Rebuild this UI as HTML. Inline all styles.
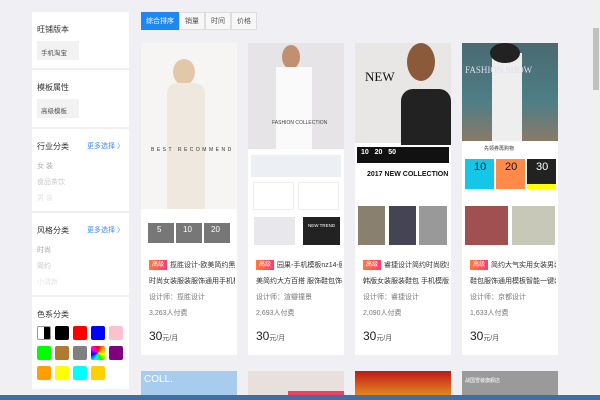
<!DOCTYPE html>
<html><head><meta charset="utf-8"><style>
*{margin:0;padding:0;box-sizing:border-box}
body{width:600px;height:400px;overflow:hidden;background:#efeff4;font-family:"Liberation Sans","Noto Sans CJK SC",sans-serif;position:relative;color:#333}
.a{position:absolute;white-space:nowrap}
.sec{position:absolute;left:32px;width:97px;background:#fff}
.h{position:absolute;left:5px;font-size:8px;color:#333}
.box{position:absolute;left:5px;width:42px;height:19px;background:#f2f2f2;font-size:6.5px;color:#555;padding:6px 0 0 4px}
.more{position:absolute;right:5px;font-size:7px;color:#3a8ef6}
.it{position:absolute;left:5px;font-size:7px}
.sw{position:absolute;width:14px;height:14px;border-radius:2px}
.card{position:absolute;top:43px;width:96px;height:312px;background:#fff}
.img{position:absolute;left:0;top:0;width:96px;height:202px;overflow:hidden}
.t{position:absolute;left:8px;font-size:7px;color:#333;line-height:16px;width:86px;white-space:nowrap;overflow:hidden}
.bd{display:inline-block;background:linear-gradient(90deg,#ff7a3c,#ff3c6e);color:#fff;font-size:6px;padding:0 3px;line-height:10px;margin-right:3px;vertical-align:1px}
.g{color:#777}
.p{position:absolute;left:8px;top:286px;font-size:12px;color:#222}
.p small{font-size:7px;color:#555}
.tab{position:absolute;top:12px;height:18px;font-size:7px;text-align:center;line-height:17px;border:1px solid #ddd;background:#f7f7f7;color:#555}
.c2{position:absolute;top:371px;width:96px;height:29px;overflow:hidden}
</style></head><body>
<div class="sec" style="top:12px;height:56px"><div class="h" style="top:12px">旺铺版本</div><div class="box" style="top:29px">手机淘宝</div></div>
<div class="sec" style="top:70px;height:57px"><div class="h" style="top:12px">模板属性</div><div class="box" style="top:29px">高级模板</div></div>
<div class="sec" style="top:129px;height:82px"><div class="h" style="top:12px">行业分类</div><div class="more" style="top:12px">更多选择 〉</div>
<div class="it" style="top:32px;color:#aaa">女 装</div><div class="it" style="top:48px;color:#c8c8c8">食品茶饮</div><div class="it" style="top:64px;color:#e4e4e4">男 装</div></div>
<div class="sec" style="top:213px;height:82px"><div class="h" style="top:12px">风格分类</div><div class="more" style="top:12px">更多选择 〉</div>
<div class="it" style="top:32px;color:#aaa">时尚</div><div class="it" style="top:48px;color:#c8c8c8">简约</div><div class="it" style="top:64px;color:#e4e4e4">小清新</div></div>
<div class="sec" style="top:297px;height:92px"><div class="h" style="top:12px">色系分类</div></div>
<div class="sw" style="left:37px;top:326px;border:1px solid #999;background:linear-gradient(90deg,#fff 50%,#000 50%)"></div>
<div class="sw" style="left:55px;top:326px;background:#000"></div>
<div class="sw" style="left:73px;top:326px;background:#f00"></div>
<div class="sw" style="left:91px;top:326px;background:#00f"></div>
<div class="sw" style="left:109px;top:326px;background:#fbc1cc"></div>
<div class="sw" style="left:37px;top:346px;background:#0f0"></div>
<div class="sw" style="left:55px;top:346px;background:#b07a30"></div>
<div class="sw" style="left:73px;top:346px;background:#808080"></div>
<div class="sw" style="left:91px;top:346px;background:conic-gradient(red,orange,yellow,lime,cyan,blue,magenta,red)"></div>
<div class="sw" style="left:109px;top:346px;background:#800080"></div>
<div class="sw" style="left:37px;top:366px;background:#ffa000"></div>
<div class="sw" style="left:55px;top:366px;background:#ff0"></div>
<div class="sw" style="left:73px;top:366px;background:#0ff"></div>
<div class="sw" style="left:91px;top:366px;background:#ffd000"></div>
<div class="tab" style="left:141px;width:38px;background:#1e88f0;color:#fff;border-color:#1e88f0">综合排序</div>
<div class="tab" style="left:179px;width:26px">销量</div>
<div class="tab" style="left:205px;width:26px">时间</div>
<div class="tab" style="left:231px;width:26px">价格</div>
<div class="card" style="left:141px">
<div class="img" style="background:#f6f5f3">
<div class="a" style="left:32px;top:16px;width:22px;height:26px;border-radius:50%;background:#e0c8a8"></div>
<div class="a" style="left:26px;top:40px;width:38px;height:160px;border-radius:10px 10px 0 0;background:#efe8de"></div>
<div class="a" style="left:10px;top:104px;font-size:5px;letter-spacing:2.5px;color:#333">BEST RECOMMEND</div>
<div class="a" style="left:0;top:166px;width:96px;height:36px;background:#fff"></div>
<div class="a" style="left:7px;top:180px;width:26px;height:20px;background:#777"></div>
<div class="a" style="left:35px;top:180px;width:26px;height:20px;background:#777"></div>
<div class="a" style="left:63px;top:180px;width:26px;height:20px;background:#777"></div>
<div class="a" style="left:16px;top:182px;color:#fff;font-size:8px">5</div><div class="a" style="left:42px;top:182px;color:#fff;font-size:8px">10</div><div class="a" style="left:70px;top:182px;color:#fff;font-size:8px">20</div>
</div>
<div class="t" style="top:215px"><span class="bd">高级</span>揽胜设计-欧美简约黑白</div>
<div class="t" style="top:231px">时尚女装服装服饰通用手机模</div>
<div class="t g" style="top:247px">设计师：揽胜设计</div>
<div class="t g" style="top:263px">3,263人付费</div>
<div class="p">30<small>元/月</small></div></div>

<div class="card" style="left:248px">
<div class="img" style="background:#fff">
<div class="a" style="left:0;top:0;width:96px;height:106px;background:#e6e4e6"></div>
<div class="a" style="left:34px;top:2px;width:18px;height:24px;border-radius:50%;background:#c09070"></div>
<div class="a" style="left:28px;top:24px;width:36px;height:82px;background:#fafafa"></div>
<div class="a" style="left:24px;top:77px;font-size:5px;color:#444">FASHION COLLECTION</div>
<div class="a" style="left:3px;top:112px;width:90px;height:22px;background:#eceff3"></div>
<div class="a" style="left:5px;top:139px;width:41px;height:28px;border:1px solid #eee"></div>
<div class="a" style="left:50px;top:139px;width:41px;height:28px;border:1px solid #eee"></div>
<div class="a" style="left:6px;top:174px;width:41px;height:28px;background:#e8e8ec"></div>
<div class="a" style="left:55px;top:174px;width:37px;height:28px;background:#222"></div>
<div class="a" style="left:60px;top:180px;font-size:4.5px;color:#fff">NEW TREND</div>
</div>
<div class="t" style="top:215px"><span class="bd">高级</span>园果-手机模板nz14-欧</div>
<div class="t" style="top:231px">美简约大方百搭 服饰鞋包饰品</div>
<div class="t g" style="top:247px">设计师：渲瓣撞景</div>
<div class="t g" style="top:263px">2,693人付费</div>
<div class="p">30<small>元/月</small></div></div>

<div class="card" style="left:355px">
<div class="img" style="background:#fff">
<div class="a" style="left:0;top:0;width:96px;height:100px;background:#e9e7e5"></div>
<div class="a" style="left:52px;top:0;width:28px;height:38px;border-radius:50%;background:#8a5a3a"></div>
<div class="a" style="left:46px;top:46px;width:50px;height:56px;border-radius:12px 12px 0 0;background:#222"></div>
<div class="a" style="left:10px;top:26px;font-size:13px;font-family:'Liberation Serif',serif;color:#111">NEW</div>
<div class="a" style="left:2px;top:104px;width:92px;height:16px;background:#111"></div>
<div class="a" style="left:6px;top:106px;font-size:7px;color:#fff;font-weight:bold">10 &nbsp; 20 &nbsp; 50</div>
<div class="a" style="left:12px;top:128px;font-size:7px;font-weight:bold;color:#111">2017 NEW COLLECTION</div>
<div class="a" style="left:3px;top:163px;width:27px;height:39px;background:#8a8070"></div>
<div class="a" style="left:34px;top:163px;width:27px;height:39px;background:#445"></div>
<div class="a" style="left:64px;top:163px;width:28px;height:39px;background:#999"></div>
</div>
<div class="t" style="top:215px"><span class="bd">高级</span>睿捷设计简约时尚欧美</div>
<div class="t" style="top:231px">韩版女装服装鞋包 手机模版</div>
<div class="t g" style="top:247px">设计师：睿捷设计</div>
<div class="t g" style="top:263px">2,090人付费</div>
<div class="p">30<small>元/月</small></div></div>

<div class="card" style="left:462px">
<div class="img" style="background:#fff">
<div class="a" style="left:0;top:0;width:96px;height:98px;background:linear-gradient(180deg,#4a6a70,#4e7e86 60%,#8a7a68)"></div>
<div class="a" style="left:30px;top:10px;width:30px;height:88px;background:#eee"></div>
<div class="a" style="left:28px;top:0;width:30px;height:20px;border-radius:50%;background:#222"></div>
<div class="a" style="left:3px;top:22px;font-size:9px;font-family:'Liberation Serif',serif;color:#dde">FASHION SHOW</div>
<div class="a" style="left:22px;top:102px;font-size:5px;color:#333">先领券再购物</div>
<div class="a" style="left:3px;top:116px;width:29px;height:30px;background:#16c6e8"></div>
<div class="a" style="left:34px;top:116px;width:29px;height:30px;background:#ff8a4a"></div>
<div class="a" style="left:65px;top:116px;width:29px;height:30px;background:#222"></div>
<div class="a" style="left:65px;top:141px;width:29px;height:5px;background:#ff0"></div>
<div class="a" style="left:12px;top:118px;font-size:11px;color:#111">10</div><div class="a" style="left:43px;top:118px;font-size:11px;color:#111">20</div><div class="a" style="left:74px;top:118px;font-size:11px;color:#fff">30</div>
<div class="a" style="left:3px;top:163px;width:43px;height:39px;background:#a05050"></div>
<div class="a" style="left:50px;top:163px;width:43px;height:39px;background:#c8c8b8"></div>
</div>
<div class="t" style="top:215px"><span class="bd">高级</span>简约大气实用女装男装</div>
<div class="t" style="top:231px">鞋包服饰通用模板智能一键装修</div>
<div class="t g" style="top:247px">设计师：京都设计</div>
<div class="t g" style="top:263px">1,633人付费</div>
<div class="p">30<small>元/月</small></div></div>

<div class="c2" style="left:141px;background:#a8ccee"><div class="a" style="left:3px;top:3px;color:#fff;font-size:10px">COLL.</div></div>
<div class="c2" style="left:248px;background:#e8e0dc"><div class="a" style="left:40px;top:20px;width:56px;height:10px;background:#f04060"></div></div>
<div class="c2" style="left:355px;background:linear-gradient(180deg,#c01818,#e8a020)"></div>
<div class="c2" style="left:462px;background:#9a9a9a"><div class="a" style="left:3px;top:6px;font-size:5px;color:#fff">战国雪装旗舰店</div></div>
<div class="a" style="left:589px;top:0;width:11px;height:400px;background:#f0f0f0"></div>
<div class="a" style="left:593px;top:28px;width:6px;height:62px;background:#c1c1c1"></div>
<div class="a" style="left:0;top:395px;width:600px;height:5px;background:#3d6fa8"></div>
</body></html>
